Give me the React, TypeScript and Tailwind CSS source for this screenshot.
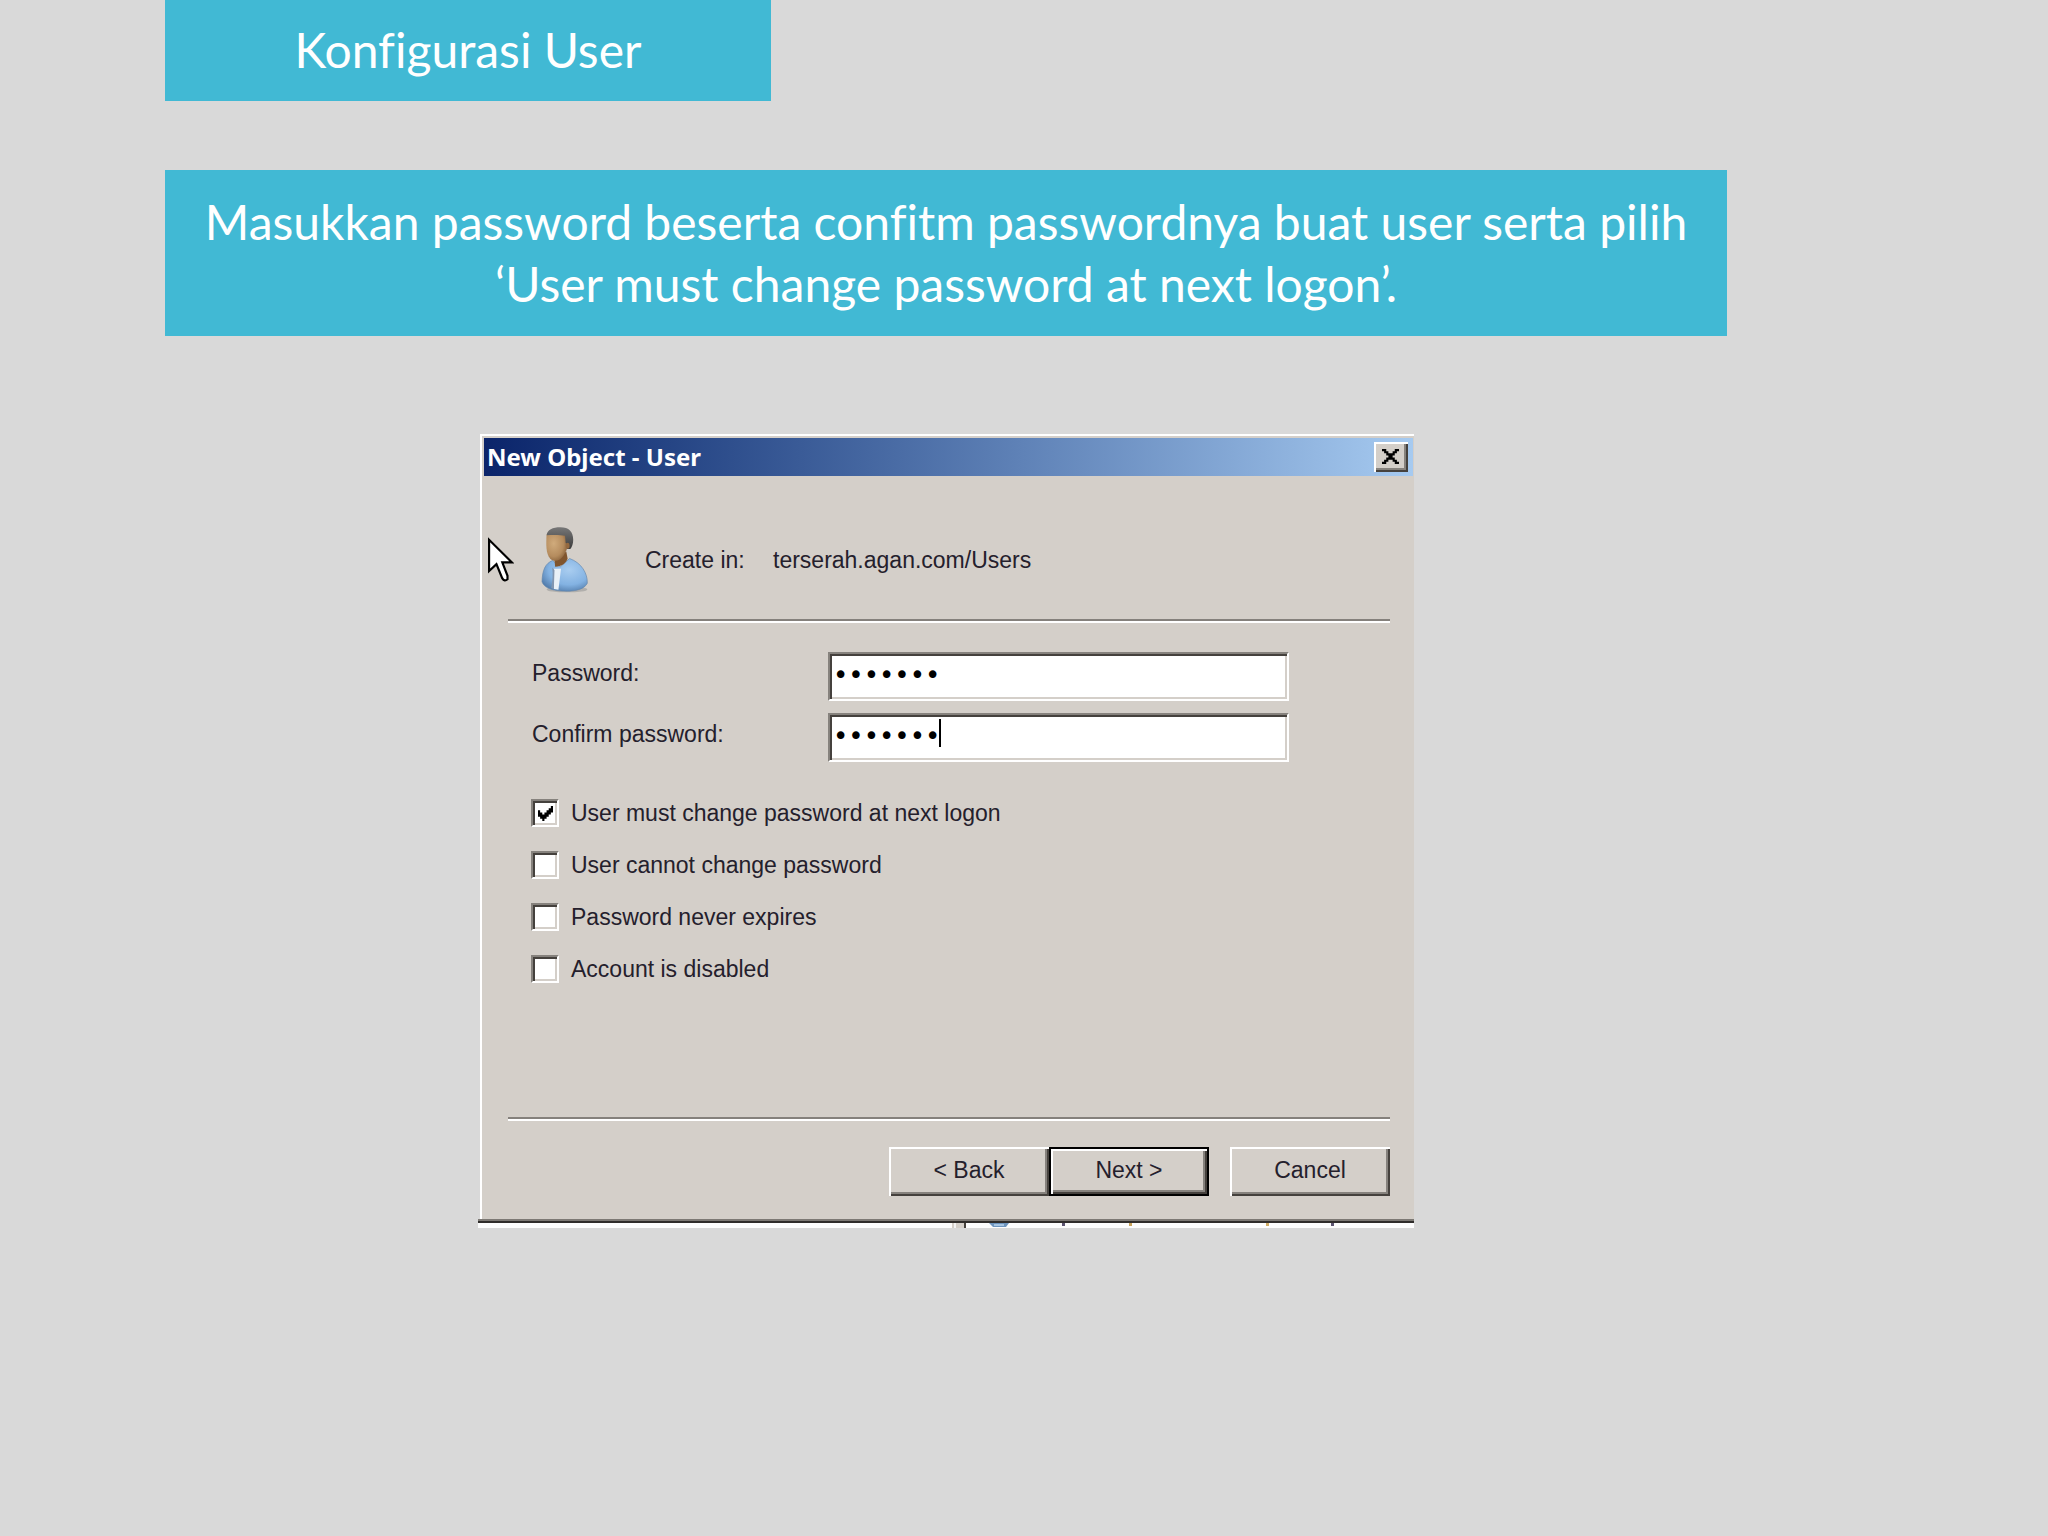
import { useState } from 'react';

interface Option {
  id: string;
  label: string;
  checked: boolean;
}

const initialOptions: Option[] = [
  { id: 'must-change', label: 'User must change password at next logon', checked: true },
  { id: 'cannot-change', label: 'User cannot change password', checked: false },
  { id: 'never-expires', label: 'Password never expires', checked: false },
  { id: 'disabled', label: 'Account is disabled', checked: false },
];

const raised =
  'bg-[#d4cfc9] shadow-[inset_2px_2px_0_#ffffff,inset_-2px_-2px_0_#45413d,inset_-4px_-4px_0_#86827d]';

function UserIcon() {
  return (
    <svg viewBox="0 0 144 204" className="h-[67px] w-[48px] shrink-0" aria-hidden="true">
      <defs>
        <radialGradient id="face" cx="0.35" cy="0.4" r="0.75">
          <stop offset="0" stopColor="#d0ab7c" />
          <stop offset="0.6" stopColor="#b58c5e" />
          <stop offset="1" stopColor="#7a5430" />
        </radialGradient>
        <radialGradient id="shirt" cx="0.6" cy="0.35" r="0.7">
          <stop offset="0" stopColor="#a9cdf0" />
          <stop offset="0.65" stopColor="#83b2e2" />
          <stop offset="1" stopColor="#557fae" />
        </radialGradient>
        <linearGradient id="hair" x1="0" y1="0" x2="0" y2="1">
          <stop offset="0" stopColor="#777777" />
          <stop offset="1" stopColor="#3c3c3c" />
        </linearGradient>
      </defs>
      <ellipse cx="78" cy="193" rx="62" ry="9" fill="#8d8f90" opacity="0.5" />
      <path
        d="M34 105C12 114 3 134 2 170C8 187 30 196 62 198C98 200 130 195 140 174C141 144 122 112 86 99L58 124Z"
        fill="url(#shirt)"
        stroke="#6487ac"
        strokeWidth="2"
      />
      <path d="M38 130L60 130L52 194L38 192Z" fill="#e9f0f7" />
      <path d="M33 126L40 134L38 192L30 189C34 166 36 146 33 126Z" fill="#8296b0" />
      <path d="M40 102L76 78L80 100C74 114 62 124 42 124Z" fill="#80552e" />
      <path
        d="M16 26C14 58 14 84 26 98C34 107 46 108 56 102C68 94 76 78 80 62L78 24L46 18Z"
        fill="url(#face)"
      />
      <path
        d="M16 28C18 12 34 4 58 4C84 4 97 18 97 42C97 55 93 65 88 70L78 70C80 60 78 54 74 52L72 30C56 26 34 27 16 28Z"
        fill="url(#hair)"
      />
      <ellipse cx="80" cy="60" rx="6" ry="9" fill="#95693f" />
    </svg>
  );
}

function Divider() {
  return <hr className="mr-[24px] ml-[26px] h-[4px] border-0 border-t-2 border-b-2 border-t-[#85817c] border-b-white" />;
}

interface PasswordFieldProps {
  id: string;
  label: string;
  caret?: boolean;
}

function PasswordField({ id, label, caret }: PasswordFieldProps) {
  return (
    <div className="flex items-center">
      <label htmlFor={id} className="w-[296px] shrink-0 pb-2">
        {label}
      </label>
      <div className="relative w-full max-w-[461px]">
        <input
          id={id}
          type="password"
          defaultValue="rahasia"
          className="block h-[49px] w-full border-2 border-t-[#86827d] border-r-white border-b-white border-l-[#86827d] bg-white pb-1 pl-[3px] font-['DejaVu_Sans'] text-[26px] text-black shadow-[inset_2px_2px_0_#45413d,inset_-2px_-2px_0_#d4cfc9] outline-none"
        />
        {caret && <span className="absolute top-[6px] left-[111px] h-[28px] w-[2px] bg-black" />}
      </div>
    </div>
  );
}

interface CheckRowProps {
  option: Option;
  onToggle: (id: string) => void;
}

function CheckRow({ option, onToggle }: CheckRowProps) {
  return (
    <div className="flex h-[28px] items-center gap-3">
      <span className="grid size-[28px] place-items-center">
        <input
          id={option.id}
          type="checkbox"
          checked={option.checked}
          onChange={() => onToggle(option.id)}
          className="peer col-start-1 row-start-1 size-[28px] appearance-none border-2 border-t-[#86827d] border-r-white border-b-white border-l-[#86827d] bg-white shadow-[inset_2px_2px_0_#45413d,inset_-2px_-2px_0_#d4cfc9]"
        />
        <svg
          viewBox="0 0 7 7"
          className="pointer-events-none invisible col-start-1 row-start-1 size-[15px] peer-checked:visible"
          aria-hidden="true"
        >
          <path d="M0 2h1v1h1v1h1v-1h1v-1h1v-1h1v-1h1v3h-1v1h-1v1h-1v1h-1v1h-1v-1h-1v-1h-1z" />
        </svg>
      </span>
      <label htmlFor={option.id}>{option.label}</label>
    </div>
  );
}

// Sliver of the window that sits behind the dialog
function WindowBehind() {
  return (
    <svg viewBox="0 0 936 5" className="block h-[5px] w-full" preserveAspectRatio="none" aria-hidden="true">
      <rect width="936" height="5" fill="#fdfdfd" />
      <rect x="474" width="13" height="5" fill="#d4cfc9" />
      <rect x="476" width="2" height="5" fill="#f4f4f4" />
      <rect x="486" width="2" height="5" fill="#45413d" />
      <path d="M511 0h20l-3 4h-13z" fill="#6d94bd" />
      <path d="M516 1h10v2h-10z" fill="#a5c4e2" />
      <rect x="584" width="3" height="3" fill="#5c5470" />
      <rect x="651" width="3" height="3" fill="#c8a35c" />
      <rect x="788" width="3" height="3" fill="#d0ac66" />
      <rect x="853" width="3" height="3" fill="#5c5470" />
    </svg>
  );
}

function NewUserDialog() {
  const [options, setOptions] = useState(initialOptions);

  const toggle = (id: string) =>
    setOptions((prev) => prev.map((o) => (o.id === id ? { ...o, checked: !o.checked } : o)));

  return (
    <section className="mx-auto mt-[98px] w-full max-w-[936px] font-['Liberation_Sans',sans-serif] text-[23px] leading-7 text-[#24202c]">
      <div className="relative ml-[2px] border-t-2 border-l-2 border-white bg-[#d4cfc9] pt-[2px]">
        <header className="ml-[2px] mr-[1px] flex h-[38px] items-center justify-between bg-linear-to-r from-[#0b246a] to-[#a6caf0] pr-[5px] pl-[3px]">
          <h2 className="font-['Noto_Sans',sans-serif] text-[24px] font-bold text-white">New Object - User</h2>
          <button type="button" aria-label="Close" className={`grid h-[30px] w-[34px] place-items-center pr-[1px] pb-[2px] ${raised}`}>
            <svg viewBox="0 0 8 7" className="h-[15px] w-[17px]" aria-hidden="true">
              <path d="M0 0h2v1h1v1h2v-1h1v-1h2v1h-1v1h-1v1h-1v1h1v1h1v1h1v1h-2v-1h-1v-1h-2v1h-1v1h-2v-1h1v-1h1v-1h1v-1h-1v-1h-1v-1h-1z" />
            </svg>
          </button>
        </header>

        <div className="flex items-center pt-[50px] pb-[26px] pl-[59px]">
          <UserIcon />
          <span className="ml-[56px] w-[128px]">Create in:</span>
          <span>terserah.agan.com/Users</span>
        </div>

        <Divider />

        <form onSubmit={(e) => e.preventDefault()}>
          <div className="mt-[29px] flex flex-col gap-3 pl-[50px]">
            <PasswordField id="password" label="Password:" />
            <PasswordField id="confirm" label="Confirm password:" caret />
          </div>

          <div className="mt-[37px] mb-[134px] flex flex-col gap-6 pl-[49px]">
            {options.map((o) => (
              <CheckRow key={o.id} option={o} onToggle={toggle} />
            ))}
          </div>

          <Divider />

          <div className="mt-[26px] flex justify-end pr-[24px] pb-[23px]">
            <button type="button" className={`h-[49px] w-[160px] pb-1 ${raised}`}>
              &lt; Back
            </button>
            <button type="submit" className={`h-[49px] w-[160px] border-2 border-black pb-1 ${raised}`}>
              Next &gt;
            </button>
            <button type="button" className={`ml-[21px] h-[49px] w-[160px] pb-1 ${raised}`}>
              Cancel
            </button>
          </div>
        </form>

        <svg viewBox="0 0 12 21" className="absolute top-[101px] left-[6px] h-[46px] w-[26px]" aria-hidden="true">
          <path
            d="M.5 1.2V15.6L3.9 12.4L6.6 19Q7.6 20.6 9 19.4V17.8L6.6 11.6H11Z"
            fill="#ffffff"
            stroke="#000000"
          />
        </svg>
      </div>
      <div className="h-[4px] border-t-2 border-b-2 border-t-[#7d7974] border-b-[#2f2c2a]" />
      <WindowBehind />
    </section>
  );
}

export default function App() {
  return (
    <main className="min-h-screen bg-[#d9d9d9] pl-[165px]">
      <div className="w-full max-w-[1562px] text-center font-['Lato',sans-serif] text-[48px] leading-[62px] text-white [font-variant-ligatures:none]">
        <h1 className="w-full max-w-[606px] bg-[#41b9d4] pt-[19px] pb-[20px]">Konfigurasi User</h1>
        <p className="mt-[69px] bg-[#41b9d4] px-[30px] pt-[21px] pb-[21px]">
          Masukkan password beserta confitm passwordnya buat user serta pilih ‘User must change password at next logon’.
        </p>
      </div>
      <div className="w-full max-w-[1562px]">
        <NewUserDialog />
      </div>
    </main>
  );
}
